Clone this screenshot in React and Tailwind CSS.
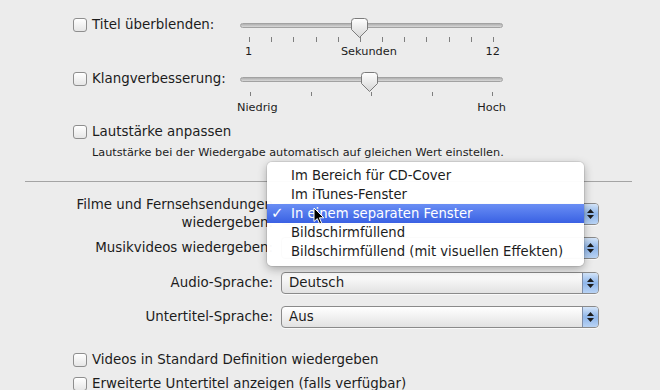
import React from "react";

const Checkbox = () => (
  <span className="block h-[14px] w-[14px] shrink-0 rounded-[3px] border border-[#8e8e8e] bg-gradient-to-b from-white to-[#e6e6e6] shadow-[inset_0_1px_0_#fff]" />
);

const Thumb = ({ className }) => (
  <svg className={`absolute top-0 ${className}`} width="17" height="20" viewBox="0 0 17 20">
    <defs>
      <linearGradient id="thumbFill" x1="0" y1="0" x2="0" y2="1">
        <stop offset="0" stopColor="#ffffff" />
        <stop offset="1" stopColor="#d6d6d6" />
      </linearGradient>
    </defs>
    <path
      d="M3.5 0.5 H13.5 Q16.5 0.5 16.5 3.5 V11.5 L8.5 19.5 L0.5 11.5 V3.5 Q0.5 0.5 3.5 0.5 Z"
      fill="url(#thumbFill)"
      stroke="#7b7b7b"
    />
  </svg>
);

const Track = () => (
  <div className="flex h-[14px] items-center">
    <div className="h-[5px] w-full rounded-full border border-[#a2a2a2] bg-gradient-to-b from-[#b0b0b0] to-[#d8d8d8]" />
  </div>
);

const Stepper = () => (
  <span className="flex w-[16px] flex-col items-center justify-center gap-[2px] border-l border-[#7f8ea8] bg-gradient-to-b from-[#d3e4f8] via-[#8fb6ea] to-[#b9d3f4]">
    <svg width="7" height="4" viewBox="0 0 7 4">
      <path d="M3.5 0 L7 4 H0 Z" fill="#1b1b1b" />
    </svg>
    <svg width="7" height="4" viewBox="0 0 7 4">
      <path d="M0 0 H7 L3.5 4 Z" fill="#1b1b1b" />
    </svg>
  </span>
);

// value is left empty where the open menu hides it
const Popup = ({ value }) => (
  <div className="flex h-[22px] w-[318px] shrink-0 overflow-hidden rounded-[4px] border border-[#8a8a8a] bg-gradient-to-b from-white via-[#f1f1f1] to-[#e2e2e2] shadow-[0_1px_0_rgba(255,255,255,0.7)]">
    <span className="flex-1 pl-[7px] leading-[20px]">{value}</span>
    <Stepper />
  </div>
);

const menuItems = [
  "Im Bereich für CD-Cover",
  "Im iTunes-Fenster",
  "In einem separaten Fenster",
  "Bildschirmfüllend",
  "Bildschirmfüllend (mit visuellen Effekten)",
];

export default function App() {
  return (
    <div className="relative h-[390px] w-[660px] overflow-hidden bg-[#ececec] font-['DejaVu_Sans',sans-serif] text-[13.4px] text-[#1c1c1c]">
      {/* Titel überblenden */}
      <div className="flex pl-[73px] pt-[18px]">
        <div className="flex w-[167px] items-start gap-[5px]">
          <Checkbox />
          <span className="leading-[14px]">Titel überblenden:</span>
        </div>
        <div className="relative w-[263px]">
          <Track />
          <Thumb className="left-[111px]" />
          <div className="mt-[5px] flex justify-between px-[9px]">
            {Array.from({ length: 12 }).map((_, i) => (
              <span key={i} className="h-[5px] w-px bg-[#7e7e7e]" />
            ))}
          </div>
          <div className="mt-[3px] flex justify-between pl-[5px] pr-[3px] text-[11.3px] leading-[14px]">
            <span>1</span>
            <span>Sekunden</span>
            <span>12</span>
          </div>
        </div>
      </div>

      {/* Klangverbesserung */}
      <div className="mt-[13px] flex pl-[73px]">
        <div className="flex w-[167px] items-start gap-[5px]">
          <Checkbox />
          <span className="leading-[14px]">Klangverbesserung:</span>
        </div>
        <div className="relative w-[263px]">
          <Track />
          <Thumb className="left-[121px]" />
          <div className="mt-[6px] flex justify-between px-[10px]">
            {Array.from({ length: 5 }).map((_, i) => (
              <span key={i} className="h-[4px] w-px bg-[#7e7e7e]" />
            ))}
          </div>
          <div className="-mx-[3px] mt-[5px] flex justify-between text-[11.3px] leading-[14px]">
            <span>Niedrig</span>
            <span>Hoch</span>
          </div>
        </div>
      </div>

      {/* Lautstärke anpassen */}
      <div className="mt-[10px] flex items-start gap-[5px] pl-[73px]">
        <Checkbox />
        <span className="leading-[14px]">Lautstärke anpassen</span>
      </div>
      <p className="mt-[7px] pl-[92px] text-[11.25px] leading-[14px]">
        Lautstärke bei der Wiedergabe automatisch auf gleichen Wert einstellen.
      </p>

      <div className="ml-[25px] mt-[21px] h-px w-[607px] bg-[#a4a4a4]" />

      {/* Popups */}
      <div className="mt-[21px] flex flex-col pl-[73px]">
        <div className="flex h-[22px] items-center gap-[8px]">
          <span className="w-[200px] whitespace-nowrap text-right leading-[18px]">
            Filme und Fernsehsendungen
            <br />
            wiedergeben:
          </span>
          <Popup value="" />
        </div>
        <div className="mt-[12px] flex h-[22px] items-center gap-[8px]">
          <span className="w-[200px] whitespace-nowrap text-right">Musikvideos wiedergeben:</span>
          <Popup value="" />
        </div>
        <div className="mt-[13px] flex h-[22px] items-center gap-[8px]">
          <span className="w-[200px] whitespace-nowrap text-right">Audio-Sprache:</span>
          <Popup value="Deutsch" />
        </div>
        <div className="mt-[12px] flex h-[22px] items-center gap-[8px]">
          <span className="w-[200px] whitespace-nowrap text-right">Untertitel-Sprache:</span>
          <Popup value="Aus" />
        </div>
      </div>

      <div className="mt-[25px] flex items-start gap-[5px] pl-[73px]">
        <Checkbox />
        <span className="leading-[14px]">Videos in Standard Definition wiedergeben</span>
      </div>
      <div className="mt-[10px] flex items-start gap-[5px] pl-[73px]">
        <Checkbox />
        <span className="leading-[14px]">Erweiterte Untertitel anzeigen (falls verfügbar)</span>
      </div>

      {/* open popup menu */}
      <div className="absolute left-[267px] top-[162px] w-[317px] rounded-[5px] bg-white/[0.97] pb-[5px] pt-[4px] text-[13.2px] shadow-[0_3px_10px_rgba(0,0,0,0.3),0_0_0_1px_rgba(0,0,0,0.08)]">
        {menuItems.map((item, i) =>
          i === 2 ? (
            <div
              key={item}
              className="relative h-[19px] bg-gradient-to-b from-[#6a8ef4] to-[#3a60e3] pl-[24px] leading-[19px] text-white"
            >
              <span className="absolute left-[4px] top-0 text-[15px] font-bold leading-[19px]">✓</span>
              {item}
            </div>
          ) : (
            <div key={item} className="h-[19px] pl-[24px] leading-[19px]">
              {item}
            </div>
          )
        )}
      </div>

      {/* mouse cursor */}
      <svg className="absolute left-[313px] top-[207px]" width="12" height="18" viewBox="0 0 12 18">
        <path
          d="M1 1 L1 14.5 L4.3 11.6 L6.6 16.8 L8.6 15.9 L6.4 10.8 L10.8 10.8 Z"
          fill="#000"
          stroke="#fff"
          strokeWidth="1"
          strokeLinejoin="round"
        />
      </svg>
    </div>
  );
}
